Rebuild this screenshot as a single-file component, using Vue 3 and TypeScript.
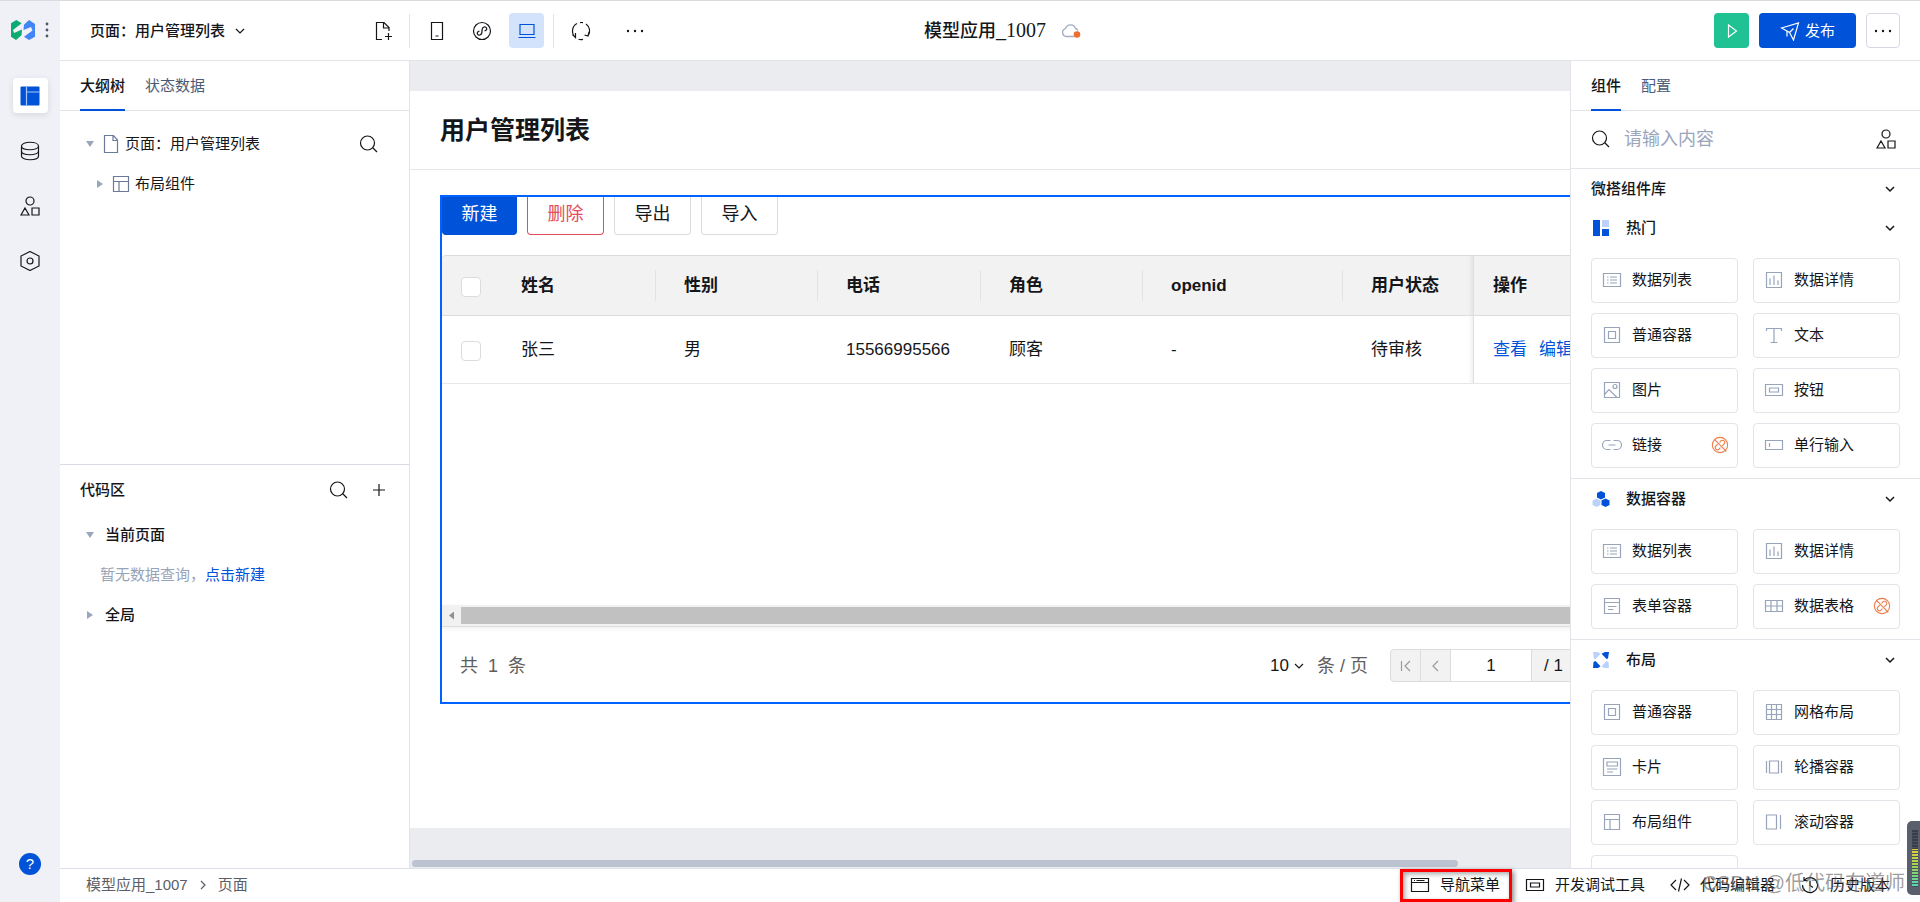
<script setup lang="ts">
import { ref } from 'vue'

type IconName = string

interface PaletteItem {
  label: string
  icon: IconName
  unlinked?: boolean
}

interface PaletteGroup {
  title: string
  kind: 'hot' | 'data' | 'layout'
  items: PaletteItem[]
}

interface Column {
  key: string
  label: string
}

/* Outline icons on a 20 x 20 grid */
const paths: Record<IconName, string> = {
  list: 'M1.5 3.5h17v13h-17zM5 7h1.5M8 7h7M5 10h1.5M8 10h7M5 13h1.5M8 13h7',
  chart: 'M2.5 2.5h15v15h-15zM6 8.5v6.5M10 5.5v9.5M14 10.5v4.5',
  box: 'M2.5 2.5h15v15h-15zM6.5 6.5h7v7h-7z',
  text: 'M2.5 6V3.5h15V6M10 3.5v14M6.5 17.5h7',
  image: 'M2.5 2.5h15v15h-15zM2.5 14.5l4.500-5 8 8M15 6.5a2 2 0 1 1-4 0a2 2 0 1 1 4 0z',
  button: 'M1.5 4.5h17v11h-17zM5.5 8h9v4h-9z',
  link: 'M8.5 5.5h-3.500a4.500 4.500 0 0 0 0 9h3.500M11.500 5.500h3.500a4.500 4.500 0 0 1 0 9h-3.500M6.500 10h7',
  field: 'M1.5 5.5h17v9h-17zM5.5 8v4',
  form: 'M2.5 2.5h15v15h-15zM2.5 6.5h15M6 10.5h8.5M6 13.5h5.5',
  grid: 'M1.5 4.5h17v11h-17zM1.5 10h17M7 4.5v11M13 4.5v11',
  mesh: 'M2.5 2.5h15v15h-15zM2.5 7.5h15M2.5 12.5h15M7.5 2.5v15M12.5 2.5v15',
  card: 'M1.5 1.5h17v17h-17zM5 5h10.5v4h-10.500zM5 12h10.500M5 15h6',
  carousel: 'M5.5 4h9v12h-9zM2.5 4v12M17.5 4v12',
  layout: 'M2.5 2.5h15v15h-15zM2.5 7.5h15M8 7.5v10',
  scroll: 'M2.5 3h10v14h-10zM16.5 3v14',
  browser: 'M1.5 3.5h17v13h-17zM1.5 7.5h17M4 5.5h1M6.5 5.5h8',
  code: 'M6 5l-5 5 5 5M14 5l5 5-5 5M11.5 3.5l-3 13',
  history: 'M4.5 5a7.500 7.500 0 1 1-2 5M4 2v3.500h3.500M10 6v4.500l3 2',
  search: 'M15.5 9a7 7 0 1 1-14 0a7 7 0 1 1 14 0zM14 14l4 4',
  plus: 'M10 4v12M4 10h12',
  chevron: 'M6 8l4 4 4-4',
  right: 'M8 6l4 4-4 4',
  left: 'M12 5l-5 5 5 5',
  first: 'M14 5l-5 5 5 5M5.5 5v10',
  file: 'M3.5 1.5h9l4 4.500v12.500h-13zM12 1.500v5h4.500',
  fileAdd: 'M9 18.5H3.5v-17h7.500l5 5V10M10.500 1.500v5.500h5.500M15.500 12v7M12 15.500h7',
  phone: 'M4.5 1.5h11v17h-11zM8.5 15h3',
  mini: 'M18.5 10a8.500 8.500 0 1 1-17 0a8.500 8.500 0 1 1 17 0zM7.500 10c-3.500 1-2.500 4.500.5 4 4-.8 0-7 4-8 3-.6 4 3 .5 4',
  laptop: 'M3 3.5h14v10h-14zM1.5 16.5h17',
  refresh: 'M4.500 16.500A8.500 8.500 0 0 1 6 2.500M1.500 13.500l3 3v-4.500M9 1.600A8.500 8.500 0 0 1 12 1.700M15 3A8.500 8.500 0 0 1 17 15M13.500 14l3.500 1 1-4M7.500 18.200A8.500 8.500 0 0 0 12 18.300',
  shapes: 'M14 5a4 4 0 1 1-8 0a4 4 0 1 1 8 0zM5 12l4 7H1zM12 12h7v7h-7z',
  database: 'M1.5 5c0-5 17-5 17 0v10c0 5-17 5-17 0zM1.5 5c0 5 17 5 17 0M1.5 10c0 5 17 5 17 0',
  hexagon: 'M10 .5l9 4.500v10l-9 4.500-9-4.500V5zM13 10a3 3 0 1 1-6 0a3 3 0 1 1 6 0z',
  play: 'M6.5 4l8 6-8 6z',
  send: 'M1.5 7l17-5-5 17-4-7.500zM9.500 11.500l4-4M7 10.500v5',
  unlink: 'M18.500 10a8.500 8.500 0 1 1-17 0a8.500 8.500 0 1 1 17 0zM3.500 3.500l13.500 13.500M9.500 7l1.500-1.500a2.400 2.400 0 0 1 3.500 3.500L12.500 11M10.500 13l-1.500 1.500a2.400 2.400 0 0 1-3.500-3.500L7.500 9',
}

const railItems: { icon: IconName; label: string }[] = [
  { icon: 'database', label: '数据模型' },
  { icon: 'shapes', label: '组件' },
  { icon: 'hexagon', label: '设置' },
]

const columns: Column[] = [
  { key: 'name', label: '姓名' },
  { key: 'gender', label: '性别' },
  { key: 'phone', label: '电话' },
  { key: 'role', label: '角色' },
  { key: 'openid', label: 'openid' },
  { key: 'status', label: '用户状态' },
]

const rows: Record<string, string>[] = [
  { name: '张三', gender: '男', phone: '15566995566', role: '顾客', openid: '-', status: '待审核' },
]

const groups: PaletteGroup[] = [
  {
    title: '热门',
    kind: 'hot',
    items: [
      { label: '数据列表', icon: 'list' },
      { label: '数据详情', icon: 'chart' },
      { label: '普通容器', icon: 'box' },
      { label: '文本', icon: 'text' },
      { label: '图片', icon: 'image' },
      { label: '按钮', icon: 'button' },
      { label: '链接', icon: 'link', unlinked: true },
      { label: '单行输入', icon: 'field' },
    ],
  },
  {
    title: '数据容器',
    kind: 'data',
    items: [
      { label: '数据列表', icon: 'list' },
      { label: '数据详情', icon: 'chart' },
      { label: '表单容器', icon: 'form' },
      { label: '数据表格', icon: 'grid', unlinked: true },
    ],
  },
  {
    title: '布局',
    kind: 'layout',
    items: [
      { label: '普通容器', icon: 'box' },
      { label: '网格布局', icon: 'mesh' },
      { label: '卡片', icon: 'card' },
      { label: '轮播容器', icon: 'carousel' },
      { label: '布局组件', icon: 'layout' },
      { label: '滚动容器', icon: 'scroll' },
      { label: '', icon: '' },
    ],
  },
]

const keyword = ref('')
const pageSize = ref('10')
const pageNo = ref('1')
</script>

<template>
  <div class="designer">
    <nav class="rail">
      <div class="brand">
        <svg class="logo" viewBox="0 0 24 20">
          <path d="M0 3.300L5.300 0l5.400 3.300L2 10l1 3 8-3.500-.5 5.800L5 20l-5-3.300z" fill="#0cab72" />
          <path d="M24 16.700L18 20l-5-3.300 8.500-6.200L20 7l-7.500 3 .5-5.300L18 0l6 4z" fill="#4285f4" />
        </svg>
        <svg class="dots" viewBox="0 0 4 16" fill="#4b5565">
          <circle cx="2" cy="2" r="1.400" /><circle cx="2" cy="8" r="1.400" /><circle cx="2" cy="14" r="1.400" />
        </svg>
      </div>
      <button class="rail-btn active" type="button" aria-label="页面设计">
        <svg class="icon" viewBox="0 0 20 20">
          <rect x=".5" y=".5" width="19" height="19" rx="1" fill="#0052d9" stroke="none" />
          <path d="M6.500 .5v19M6.500 6h13" stroke="#a8c6ff" />
        </svg>
      </button>
      <button v-for="r in railItems" :key="r.icon" class="rail-btn" type="button" :aria-label="r.label">
        <svg class="icon" viewBox="0 0 20 20"><path :d="paths[r.icon]" /></svg>
      </button>
      <button class="help" type="button" aria-label="帮助">?</button>
    </nav>

    <header class="topbar">
      <div class="bar-left">
        <div class="page-pick">
          <button class="page-btn" type="button">
            页面：用户管理列表
            <svg class="icon" viewBox="0 0 20 20"><path :d="paths.chevron" /></svg>
          </button>
          <button class="tool" type="button" aria-label="新建页面">
            <svg class="icon" viewBox="0 0 20 20"><path :d="paths.fileAdd" /></svg>
          </button>
        </div>
        <i class="split"></i>
        <button class="tool" type="button" aria-label="手机">
          <svg class="icon" viewBox="0 0 20 20"><path :d="paths.phone" /></svg>
        </button>
        <button class="tool" type="button" aria-label="小程序">
          <svg class="icon" viewBox="0 0 20 20"><path :d="paths.mini" /></svg>
        </button>
        <button class="tool on" type="button" aria-label="电脑">
          <svg class="icon" viewBox="0 0 20 20"><path :d="paths.laptop" /></svg>
        </button>
        <i class="split"></i>
        <button class="tool" type="button" aria-label="刷新">
          <svg class="icon" viewBox="0 0 20 20"><path :d="paths.refresh" /></svg>
        </button>
        <button class="tool more" type="button" aria-label="更多">
          <svg class="icon solid" viewBox="0 0 20 20">
            <circle cx="3" cy="10" r="1.200" /><circle cx="10" cy="10" r="1.200" /><circle cx="17" cy="10" r="1.200" />
          </svg>
        </button>
      </div>
      <div class="app-name">
        <span>模型应用<span class="serif">_1007</span></span>
        <svg class="cloud" viewBox="0 0 20 16">
          <path d="M13 13.500H5a4 4 0 0 1-.5-7.800 5.200 5.200 0 0 1 10-.2 4 4 0 0 1 2.500 2" fill="none" stroke="#a3adc2" stroke-width="1.300" />
          <circle cx="16" cy="11.500" r="3.300" fill="#ed6e33" />
        </svg>
      </div>
      <div class="bar-right">
        <button class="run" type="button" aria-label="预览">
          <svg class="icon" viewBox="0 0 20 20"><path :d="paths.play" /></svg>
        </button>
        <button class="publish" type="button">
          <svg class="icon" viewBox="0 0 20 20"><path :d="paths.send" /></svg>
          发布
        </button>
        <button class="etc" type="button" aria-label="更多操作">
          <svg class="icon solid" viewBox="0 0 20 20">
            <circle cx="3" cy="10" r="1.200" /><circle cx="10" cy="10" r="1.200" /><circle cx="17" cy="10" r="1.200" />
          </svg>
        </button>
      </div>
    </header>

    <aside class="outline">
      <section class="half">
        <div class="tabs">
          <button class="tab active" type="button">大纲树</button>
          <button class="tab" type="button">状态数据</button>
        </div>
        <div class="tree">
          <div class="node">
            <i class="caret down"></i>
            <svg class="icon slate" viewBox="0 0 20 20"><path :d="paths.file" /></svg>
            <span>页面：用户管理列表</span>
            <button class="tool search" type="button" aria-label="搜索">
              <svg class="icon" viewBox="0 0 20 20"><path :d="paths.search" /></svg>
            </button>
          </div>
          <div class="node child">
            <i class="caret side"></i>
            <svg class="icon slate" viewBox="0 0 20 20"><path :d="paths.layout" /></svg>
            <span>布局组件</span>
          </div>
        </div>
      </section>
      <section class="half code">
        <div class="code-head">
          <h2>代码区</h2>
          <button class="tool" type="button" aria-label="搜索代码">
            <svg class="icon" viewBox="0 0 20 20"><path :d="paths.search" /></svg>
          </button>
          <button class="tool" type="button" aria-label="新增">
            <svg class="icon" viewBox="0 0 20 20"><path :d="paths.plus" /></svg>
          </button>
        </div>
        <div class="node strong"><i class="caret down"></i><span>当前页面</span></div>
        <p class="hint">暂无数据查询，<a href="#">点击新建</a></p>
        <div class="node strong"><i class="caret side"></i><span>全局</span></div>
      </section>
    </aside>

    <main class="canvas">
      <div class="page">
        <h1>用户管理列表</h1>
        <div class="selected">
          <div class="inner">
            <div class="actions">
              <button class="act primary" type="button">新建</button>
              <button class="act danger" type="button">删除</button>
              <button class="act" type="button">导出</button>
              <button class="act" type="button">导入</button>
            </div>
            <table>
              <colgroup>
                <col class="c-check" />
                <col v-for="c in columns" :key="c.key" :class="'c-' + c.key" />
                <col />
              </colgroup>
              <thead>
                <tr>
                  <th><input type="checkbox" aria-label="全选" /></th>
                  <th v-for="c in columns" :key="c.key" :class="{ bar: c.key !== 'status' }">{{ c.label }}</th>
                  <th class="fixed">操作</th>
                </tr>
              </thead>
              <tbody>
                <tr v-for="row in rows" :key="row.phone">
                  <td><input type="checkbox" aria-label="选择此行" /></td>
                  <td v-for="c in columns" :key="c.key">{{ row[c.key] }}</td>
                  <td class="fixed"><a href="#">查看</a><a href="#">编辑</a></td>
                </tr>
              </tbody>
            </table>
            <div class="blank"></div>
            <div class="hscroll"><span class="arrow"><i></i></span><span class="thumb"></span></div>
            <div class="pager">
              <span class="total">共&nbsp; 1 &nbsp;条</span>
              <label class="size">
                <select v-model="pageSize"><option>10</option><option>20</option></select>
                <svg class="icon" viewBox="0 0 20 20"><path :d="paths.chevron" /></svg>
                <span>条 / 页</span>
              </label>
              <div class="jump">
                <button type="button" aria-label="首页"><svg class="icon" viewBox="0 0 20 20"><path :d="paths.first" /></svg></button>
                <button type="button" aria-label="上一页"><svg class="icon" viewBox="0 0 20 20"><path :d="paths.left" /></svg></button>
                <input v-model="pageNo" type="text" aria-label="页码" />
                <span class="count">/ 1</span>
              </div>
            </div>
          </div>
        </div>
      </div>
      <div class="track"><span></span></div>
    </main>

    <aside class="palette">
      <div class="tabs">
        <button class="tab active" type="button">组件</button>
        <button class="tab" type="button">配置</button>
      </div>
      <div class="finder">
        <svg class="icon" viewBox="0 0 20 20"><path :d="paths.search" /></svg>
        <input v-model="keyword" type="text" placeholder="请输入内容" aria-label="搜索组件" />
        <svg class="icon" viewBox="0 0 20 20"><path :d="paths.shapes" /></svg>
      </div>
      <div class="library">
        <div class="lib-head first">
          <h2>微搭组件库</h2>
          <svg class="icon" viewBox="0 0 20 20"><path :d="paths.chevron" /></svg>
        </div>
        <section v-for="g in groups" :key="g.title" class="group">
          <div class="lib-head">
            <svg v-if="g.kind === 'hot'" class="mark" viewBox="0 0 16 16">
              <path d="M0 0h7v16H0zM9 9h7v7H9z" fill="#0052d9" /><path d="M9 0h7v7H9z" fill="#bbd3fb" />
            </svg>
            <svg v-else-if="g.kind === 'data'" class="mark" viewBox="0 0 16 16">
              <path d="M8 0l4 2v4.500L8 8.500 4 6.500V2zM12.500 7.500l4 2V14l-4 2-4-2V9.500z" fill="#0052d9" />
              <path d="M3.500 7.500l4 2V14l-4 2-4-2V9.500z" fill="#bbd3fb" />
            </svg>
            <svg v-else class="mark" viewBox="0 0 16 16">
              <path d="M16 0h-4L8.500 1.800 13.500 7 15 6.500zM0 16h5l2.500-1.800L2.500 9 .5 10z" fill="#0052d9" />
              <path d="M0 0l1 7 1.500 0L7.500 2 5 0zM16 16l-.5-6L13.500 9 8.500 14.200 11 16z" fill="#bbd3fb" />
            </svg>
            <h3>{{ g.title }}</h3>
            <svg class="icon" viewBox="0 0 20 20"><path :d="paths.chevron" /></svg>
          </div>
          <div class="cards">
            <button v-for="(item, i) in g.items" :key="i" class="card" type="button">
              <svg class="icon pale" viewBox="0 0 20 20"><path :d="paths[item.icon]" /></svg>
              <span>{{ item.label }}</span>
              <svg v-if="item.unlinked" class="icon warn" viewBox="0 0 20 20"><path :d="paths.unlink" /></svg>
            </button>
          </div>
        </section>
      </div>
    </aside>

    <footer class="status">
      <nav class="crumbs">
        <a href="#">模型应用_1007</a>
        <svg class="icon" viewBox="0 0 20 20"><path :d="paths.right" /></svg>
        <a href="#">页面</a>
      </nav>
      <div class="dock">
        <button class="dock-btn marked" type="button">
          <svg class="icon" viewBox="0 0 20 20"><path :d="paths.browser" /></svg>导航菜单
        </button>
        <button class="dock-btn" type="button">
          <svg class="icon" viewBox="0 0 20 20"><path :d="paths.button" /></svg>开发调试工具
        </button>
        <button class="dock-btn" type="button">
          <svg class="icon" viewBox="0 0 20 20"><path :d="paths.code" /></svg>代码编辑器
        </button>
        <button class="dock-btn" type="button">
          <svg class="icon" viewBox="0 0 20 20"><path :d="paths.history" /></svg>历史版本
        </button>
      </div>
    </footer>

    <div class="watermark">CSDN @低代码布道师</div>
    <div class="meter"><i></i></div>
  </div>
</template>

<style>
body {
  margin: 0;
}
</style>

<style scoped>
.designer,
.designer * {
  box-sizing: border-box;
}
.designer {
  position: relative;
  display: grid;
  grid-template-columns: 60px 350px minmax(0, 1fr) 350px;
  grid-template-rows: 60px minmax(0, 1fr) 34px;
  height: 100vh;
  overflow: hidden;
  border-top: 1px solid #dadbdf;
  background: #fff;
  color: #14161a;
  font-family: "Liberation Sans", "Noto Sans CJK SC", sans-serif;
  font-size: 15px;
  line-height: 20px;
}
button,
input,
select {
  margin: 0;
  padding: 0;
  border: 0;
  background: none;
  color: inherit;
  font: inherit;
}
a {
  color: #0052d9;
  text-decoration: none;
}
h1,
h2,
h3,
p {
  margin: 0;
}
h2,
h3 {
  font-size: 15px;
  font-weight: 500;
}
.icon {
  flex: none;
  width: 20px;
  height: 20px;
  fill: none;
  stroke: currentColor;
  stroke-width: 1.2;
}
.icon.solid {
  fill: currentColor;
  stroke: none;
}

/* Left rail */
.rail {
  grid-row: 1 / -1;
  display: flex;
  flex-direction: column;
  align-items: center;
  gap: 20px;
  padding-bottom: 27px;
  background: #f0f1f6;
}
.brand {
  display: flex;
  align-items: center;
  gap: 10px;
  height: 57px;
}
.logo {
  width: 24px;
  height: 20px;
}
.dots {
  width: 4px;
  height: 16px;
}
.rail-btn {
  display: flex;
  align-items: center;
  justify-content: center;
  width: 35px;
  height: 35px;
  border-radius: 4px;
}
.rail-btn.active {
  background: #fff;
  box-shadow: 0 2px 6px rgba(30, 40, 70, 0.12);
}
.help {
  width: 22px;
  height: 22px;
  margin-top: auto;
  border-radius: 50%;
  background: #0052d9;
  color: #fff;
}

/* Top bar */
.topbar {
  grid-column: 2 / -1;
  display: grid;
  grid-template-columns: 1fr auto 1fr;
  align-items: center;
  padding: 0 20px 0 30px;
  border-bottom: 1px solid #e2e4ea;
}
.bar-left,
.bar-right,
.page-pick,
.page-btn,
.app-name {
  display: flex;
  align-items: center;
}
.bar-left {
  gap: 9px;
}
.bar-right {
  gap: 10px;
}
.page-pick {
  justify-content: space-between;
  width: 310px;
}
.page-btn {
  gap: 5px;
  font-weight: 500;
}
.split {
  width: 1px;
  height: 34px;
  background: #e2e4ea;
}
.tool {
  display: flex;
  align-items: center;
  justify-content: center;
  width: 35px;
  height: 35px;
  border-radius: 4px;
}
.bar-left > .tool + .tool {
  margin-left: 1px;
}
.tool.on {
  background: #d4e3fc;
  color: #0052d9;
}
.bar-left > .tool.more {
  margin-left: 10px;
}
.app-name {
  gap: 15px;
  padding-left: 15px;
  font-size: 18px;
  font-weight: 500;
}
.serif {
  font-family: "Liberation Serif", serif;
  font-size: 20px;
}
.cloud {
  width: 20px;
  height: 16px;
}
.bar-right {
  justify-content: flex-end;
}
.run,
.publish,
.etc {
  display: flex;
  align-items: center;
  justify-content: center;
  gap: 5px;
  width: 35px;
  height: 35px;
  border-radius: 4px;
}
.run {
  background: #20c192;
  color: #fff;
}
.publish {
  width: 97px;
  background: #0052d9;
  color: #fff;
}
.etc {
  width: 34px;
  border: 1px solid #d5d8e3;
}

/* Tabs */
.tabs {
  display: flex;
  gap: 20px;
  flex: none;
  height: 50px;
  padding: 0 20px;
  border-bottom: 1px solid #e2e4ea;
}
.tab {
  height: 50px;
  border-bottom: 2px solid transparent;
  padding-top: 2px;
  color: #4b5b76;
}
.tab.active {
  border-color: #0052d9;
  color: #14161a;
  font-weight: 500;
}

/* Outline panel */
.outline {
  display: flex;
  flex-direction: column;
  border-right: 1px solid #e2e4ea;
}
.half {
  flex: 1;
}
.tree {
  padding-top: 13px;
}
.node {
  display: flex;
  align-items: center;
  height: 40px;
  padding: 0 23px 0 25px;
}
.node .icon.slate {
  margin: 0 4px 0 6px;
}
.node.child {
  padding-left: 35px;
}
.node.strong {
  font-weight: 500;
}
.node.strong .caret {
  margin-right: 10px;
}
.caret {
  flex: none;
  width: 10px;
  height: 10px;
  background: #9aa6bd;
}
.caret.down {
  clip-path: polygon(10% 20%, 90% 20%, 50% 80%);
}
.caret.side {
  clip-path: polygon(20% 10%, 80% 50%, 20% 90%);
}
.slate {
  color: #6b7a99;
}
.search {
  margin-left: auto;
}
.code {
  border-top: 1px solid #d9dce6;
}
.code-head {
  display: flex;
  align-items: center;
  gap: 5px;
  height: 50px;
  padding: 0 13px 0 20px;
}
.code-head h2 {
  flex: 1;
}
.hint {
  padding-left: 40px;
  color: #97a3b9;
  line-height: 40px;
}

/* Canvas */
.canvas {
  display: flex;
  flex-direction: column;
  overflow: hidden;
  padding-top: 30px;
  background: #ebecf0;
}
.page {
  flex: 1;
  min-height: 0;
  background: #fff;
  font-size: 17px;
}
h1 {
  height: 79px;
  padding: 24px 30px 0;
  border-bottom: 1px solid #e5e6ea;
  font-size: 25px;
  line-height: 30px;
}
.selected {
  margin: 25px 0 0 30px;
  border: solid #0062ff;
  border-width: 2px 0 2px 2px;
}
.inner {
  min-width: 1200px;
}
.actions {
  display: flex;
  gap: 10px;
  padding-bottom: 20px;
}
.act {
  width: 77px;
  height: 38px;
  padding-bottom: 4px;
  border: 1px solid #dcdcdc;
  border-top: 0;
  border-radius: 0 0 4px 4px;
  font-size: 18px;
}
.act.primary {
  width: 75px;
  border-color: #0052d9;
  background: #0052d9;
  color: #fff;
}
.act.danger {
  border-color: #e34d59;
  color: #e34d59;
}
table {
  width: 100%;
  border-spacing: 0;
  table-layout: fixed;
}
.c-check {
  width: 60px;
}
.c-name,
.c-phone {
  width: 163px;
}
.c-gender,
.c-role {
  width: 162px;
}
.c-openid {
  width: 200px;
}
.c-status {
  width: 121px;
}
th,
td {
  position: relative;
  padding: 0 0 0 19px;
  text-align: left;
  white-space: nowrap;
}
th {
  height: 61px;
  border: solid #dcdcdc;
  border-width: 1px 0;
  background: #f2f2f2;
}
th:first-child {
  border-top-left-radius: 4px;
}
td {
  height: 68px;
  border-bottom: 1px solid #e7e7e7;
}
.fixed {
  padding-left: 20px;
}
.bar::after {
  position: absolute;
  top: 14px;
  right: 9px;
  width: 1px;
  height: 31px;
  background: #e3e3e3;
  content: "";
}
.fixed::before {
  position: absolute;
  top: 0;
  bottom: 0;
  left: -5px;
  width: 5px;
  border-right: 1px solid #e0e0e0;
  background: linear-gradient(to right, rgba(0, 0, 0, 0), rgba(0, 0, 0, 0.06));
  content: "";
}
td a + a {
  margin-left: 12px;
}
th input,
td input {
  display: block;
  width: 20px;
  height: 20px;
  margin-top: 2px;
  border: 1px solid #dcdcdc;
  border-radius: 4px;
  background: #fff;
  appearance: none;
}
.blank {
  height: 221px;
}
.hscroll {
  display: flex;
  height: 22px;
  padding: 2px 0;
  border-bottom: 1px solid #dcdcdc;
  background: #f1f1f1;
  box-shadow: 0 2px 5px rgba(0, 0, 0, 0.06);
}
.arrow {
  display: flex;
  align-items: center;
  justify-content: center;
  width: 19px;
}
.arrow i {
  width: 5px;
  height: 8px;
  background: #8f8f8f;
  clip-path: polygon(100% 0, 100% 100%, 0 50%);
}
.thumb {
  flex: 1;
  background: #c1c1c1;
}
.pager {
  display: flex;
  align-items: center;
  height: 75px;
  padding: 2px 31px 0 18px;
}
.total {
  color: #5e5e5e;
  font-size: 18px;
}
.size {
  display: flex;
  align-items: center;
  margin-left: auto;
}
.size select {
  appearance: none;
}
.size span {
  margin: 0 22px 0 8px;
  color: #5e5e5e;
  font-size: 18px;
}
.jump {
  display: flex;
  height: 33px;
  border: 1px solid #dcdcdc;
  border-radius: 4px;
  background: #f2f2f2;
}
.jump button {
  display: flex;
  align-items: center;
  justify-content: center;
  width: 30px;
  border-right: 1px solid #dcdcdc;
  color: #9a9a9a;
}
.jump input {
  width: 81px;
  border-right: 1px solid #dcdcdc;
  background: #fff;
  text-align: center;
}
.count {
  width: 78px;
  padding-left: 12px;
  line-height: 31px;
}
.track {
  display: flex;
  flex: none;
  align-items: flex-end;
  height: 40px;
  padding: 0 2px 1px;
}
.track span {
  width: 90.5%;
  height: 7px;
  border-radius: 4px;
  background: #bcc3d0;
}

/* Component palette */
.palette {
  display: flex;
  flex-direction: column;
  overflow: hidden;
  border-left: 1px solid #e2e4ea;
}
.finder {
  display: flex;
  flex: none;
  align-items: center;
  gap: 13px;
  height: 58px;
  padding: 0 24px 2px 20px;
  border-bottom: 1px solid #e2e4ea;
}
.finder input {
  flex: 1;
  min-width: 0;
  outline: 0;
  font-size: 18px;
}
.finder input::placeholder {
  color: #9ba6bb;
}
.library {
  flex: 1;
  min-height: 0;
}
.lib-head {
  display: flex;
  align-items: center;
  height: 40px;
  padding: 0 20px;
}
.lib-head.first {
  height: 39px;
}
.lib-head .icon {
  margin-left: auto;
  stroke-width: 1.5;
}
.mark {
  width: 16px;
  height: 16px;
  margin: 0 17px 0 2px;
  overflow: visible;
}
.group + .group {
  border-top: 1px solid #e2e4ea;
}
.cards {
  display: grid;
  grid-template-columns: 1fr 1fr;
  gap: 10px 15px;
  padding: 10px 20px;
}
.card {
  display: flex;
  align-items: center;
  gap: 10px;
  height: 45px;
  padding: 0 8px 2px 10px;
  border: 1px solid #e2e4ea;
  border-radius: 4px;
}
.pale {
  color: #98a4ba;
}
.warn {
  width: 18px;
  margin-left: auto;
  color: #ed7b47;
}

/* Status bar */
.status {
  grid-column: 2 / -1;
  display: flex;
  align-items: center;
  justify-content: space-between;
  padding: 0 30px 0 26px;
  border-top: 1px solid #dfe1ea;
  background: #fff;
}
.crumbs {
  display: flex;
  align-items: center;
  gap: 5px;
  padding-bottom: 2px;
}
.crumbs a,
.crumbs .icon {
  color: #5b5e66;
}
.dock {
  display: flex;
  align-items: center;
  height: 100%;
}
.dock-btn {
  display: flex;
  align-items: center;
  gap: 10px;
  height: 33px;
  padding: 0 0 2px 25px;
}
.dock-btn.marked {
  padding: 0 9px 2px 7px;
  border: 3px solid #fe0000;
  box-shadow: 2px 2px 5px rgba(0, 0, 0, 0.45), inset 2px 2px 5px rgba(0, 0, 0, 0.35);
}
.marked + .dock-btn {
  padding-left: 13px;
}
.watermark {
  position: absolute;
  right: 15px;
  bottom: 4px;
  color: rgba(90, 90, 90, 0.6);
  font-size: 20px;
  line-height: 30px;
}
.meter {
  position: absolute;
  right: 0;
  bottom: 7px;
  width: 13px;
  height: 74px;
  padding: 9px 2px 8px 5px;
  border-radius: 5px 0 0 5px;
  background: #5a5f6e;
}
.meter i {
  display: block;
  height: 100%;
  background:
    repeating-linear-gradient(to bottom, transparent 0 2px, #4b505e 2px 3px),
    linear-gradient(to bottom, #3a3e4a 0 33%, #e6d23c 33%, #9ad45a 65%, #4fd8b4);
}
</style>
